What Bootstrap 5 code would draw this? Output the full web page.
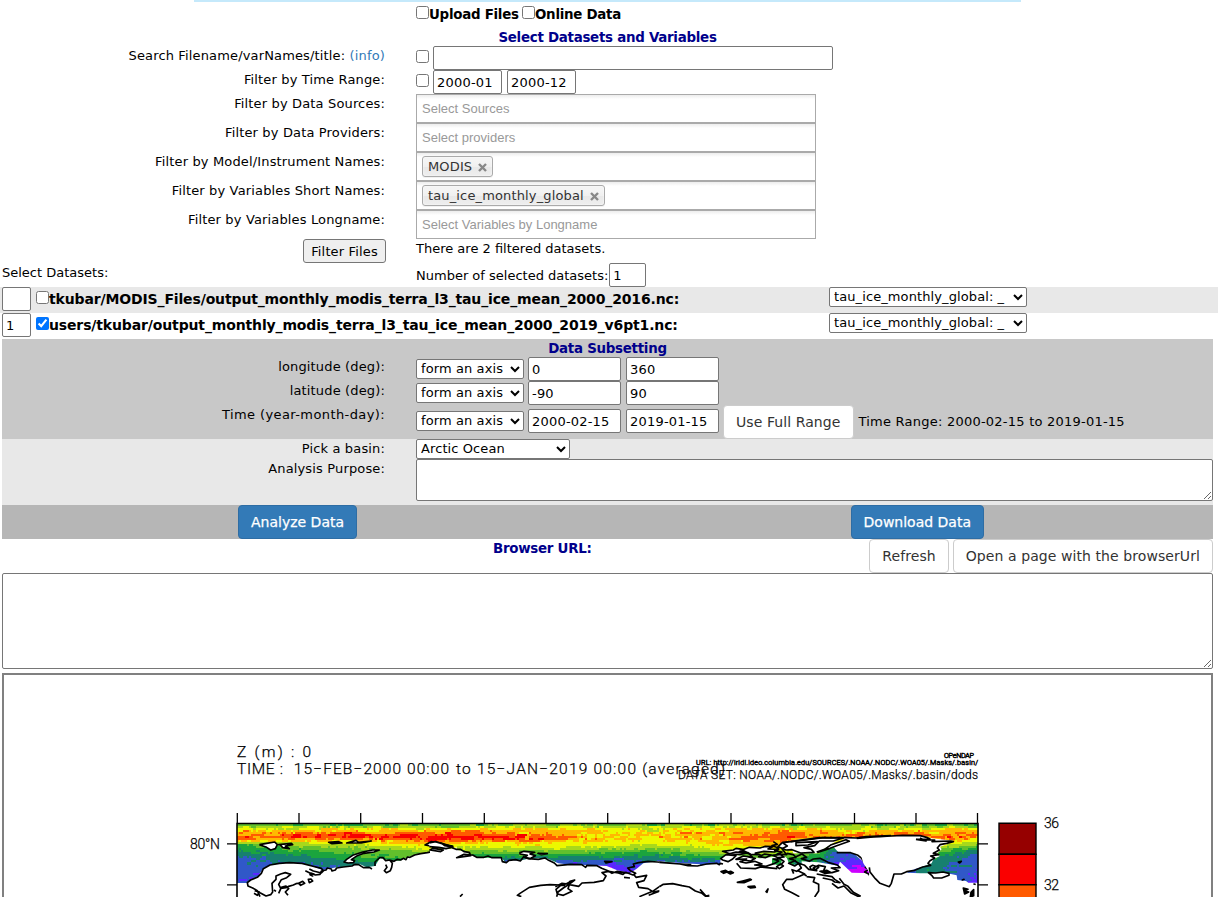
<!DOCTYPE html>
<html lang="en">
<head>
<meta charset="utf-8">
<meta name="viewport" content="width=device-width, initial-scale=1">
<title>Select Datasets and Variables</title>
<link rel="stylesheet" href="https://cdn.jsdelivr.net/npm/bootstrap@5.3.0/dist/css/bootstrap.min.css">
<style>
body{font-family:Verdana,"DejaVu Sans",sans-serif;font-size:13px;line-height:19px;color:#000;background:#fff;height:897px;overflow:hidden}
.topbar{height:2px;width:827px;margin-left:194px;background:#c5e9fb}
.page{width:1211px;margin-left:2px}
.lab{width:383px;margin-right:31px;text-align:right;flex:none;letter-spacing:.15px}
.lab a{color:#337ab7;text-decoration:none}
.head{color:#00008b;font-weight:700;font-size:13.4px;letter-spacing:-.27px;text-align:center}
.strong{font-weight:700;font-size:13.4px;letter-spacing:-.27px}
.h24{height:24px}.h29{height:29px}
input[type=checkbox]{width:13px;height:13px;margin:0;flex:none}
.fld{height:24px;border:1px solid #767676;border-radius:2px;padding:1px 3px;font-size:13px;line-height:20px;letter-spacing:.2px;background:#fff;color:#000;flex:none}
.sel{height:20px;border:1px solid #767676;border-radius:2px;padding:0 14px 0 4px;font-size:13px;line-height:18px;letter-spacing:.1px;color:#000;flex:none;appearance:none;
background:#fff url("data:image/svg+xml,%3Csvg xmlns='http://www.w3.org/2000/svg' width='10' height='7'%3E%3Cpath d='M1 1l4 4 4-4' fill='none' stroke='%23000' stroke-width='2'/%3E%3C/svg%3E") no-repeat right 3px center}
.chosen{width:400px;height:29px;border:1px solid #aaa;padding:0 5px;background:linear-gradient(#eee 1%,#fff 15%);flex:none}
.ph{color:#999;font-family:"Liberation Sans",Arial,sans-serif;font-size:13px}
.chip{height:21px;border:1px solid #aaa;border-radius:3px;background:linear-gradient(#f4f4f4 20%,#f0f0f0 50%,#e8e8e8 52%,#eee);color:#333;padding:0 5px;line-height:19px;letter-spacing:.14px;box-shadow:0 0 2px #fff inset,0 1px 0 rgba(0,0,0,.05)}
.chip svg{margin-left:6px;vertical-align:-1px}
.chip path{stroke:#888;stroke-width:2.4}
.filterbtn{height:24px;width:83px;border:1px solid #767676;border-radius:3px;background:#efefef;font-size:13px;padding:0;color:#000;letter-spacing:.15px}
.ds{height:26px;padding-left:2px}
.ds .nm{width:780px;line-height:25px;font-size:14px;letter-spacing:-.14px}
.bx{height:34px;font-size:14px;line-height:20px;padding:6px 12px;border-radius:4px;white-space:nowrap;flex:none;letter-spacing:.08px}
.bx-def{background:#fff;border-color:#ccc;color:#333}
.bx-pri{background:#337ab7;border-color:#2e6da4;color:#fff;letter-spacing:0;-webkit-text-stroke:.25px #fff}
.g1{background:#c8c8c8}.g2{background:#e8e8e8}.g3{background:#b6b6b6}
textarea{display:block;border:1px solid #767676;border-radius:2px;background:#fff}
.plot{border:2px solid #808080;border-bottom:0;height:224px;margin-top:4px;overflow:hidden}
.plot svg{display:block;font-family:"Roboto",sans-serif}
</style>
</head>
<body>
<div class="topbar"></div>
<div class="page">
  <div class="d-flex align-items-start" style="height:26px;padding:4px 0 0 414px">
    <input type="checkbox"><span class="strong" style="width:93px;line-height:17px">Upload Files</span>
    <input type="checkbox"><span class="strong" style="line-height:17px">Online Data</span>
  </div>
  <div class="head" style="height:18px;line-height:19px">Select Datasets and Variables</div>
  <div class="d-flex h24"><div class="lab">Search Filename/varNames/title: <a href="#">(info)</a></div>
    <input type="checkbox" class="mt-1"><input class="fld" style="width:400px;margin-left:4px"></div>
  <div class="d-flex h24"><div class="lab">Filter by Time Range:</div>
    <input type="checkbox" class="mt-1"><input class="fld" style="width:69px;margin-left:4px" value="2000-01"><input class="fld" style="width:69px;margin-left:5px" value="2000-12"></div>
  <div class="d-flex h29"><div class="lab">Filter by Data Sources:</div><div class="chosen d-flex align-items-center ph">Select Sources</div></div>
  <div class="d-flex h29"><div class="lab">Filter by Data Providers:</div><div class="chosen d-flex align-items-center ph">Select providers</div></div>
  <div class="d-flex h29"><div class="lab">Filter by Model/Instrument Names:</div><div class="chosen d-flex align-items-center"><span class="chip">MODIS<svg width="9" height="9"><path d="M1 1l7 7M8 1L1 8"/></svg></span></div></div>
  <div class="d-flex h29"><div class="lab">Filter by Variables Short Names:</div><div class="chosen d-flex align-items-center"><span class="chip">tau_ice_monthly_global<svg width="9" height="9"><path d="M1 1l7 7M8 1L1 8"/></svg></span></div></div>
  <div class="d-flex h29"><div class="lab">Filter by Variables Longname:</div><div class="chosen d-flex align-items-center ph">Select Variables by Longname</div></div>
  <div class="d-flex h24"><div class="lab" style="width:384px;margin-right:30px"><button class="filterbtn">Filter Files</button></div><div>There are 2 filtered datasets.</div></div>
  <div class="d-flex h24"><div style="width:414px">Select Datasets:</div><div class="d-flex align-items-center">Number of selected datasets:<input class="fld" style="width:37px;margin-left:1px" value="1"></div></div>
</div>
<div class="ds d-flex g2">
  <input class="fld" style="width:29px"><input type="checkbox" style="margin:4px 0 0 5px"><span class="strong nm">tkubar/MODIS_Files/output_monthly_modis_terra_l3_tau_ice_mean_2000_2016.nc:</span>
  <select class="sel" style="width:198px"><option>tau_ice_monthly_global: _</option></select>
</div>
<div class="ds d-flex">
  <input class="fld" style="width:29px" value="1"><input type="checkbox" checked style="margin:4px 0 0 5px"><span class="strong nm">users/tkubar/output_monthly_modis_terra_l3_tau_ice_mean_2000_2019_v6pt1.nc:</span>
  <select class="sel" style="width:198px"><option>tau_ice_monthly_global: _</option></select>
</div>
<div class="page">
  <div class="g1" style="height:100px">
    <div class="head" style="height:18px">Data Subsetting</div>
    <div class="d-flex h24"><div class="lab">longitude (deg):</div><select class="sel" style="width:108px;margin-top:2px"><option>form an axis</option></select><input class="fld" style="width:93px;margin-left:4px" value="0"><input class="fld" style="width:93px;margin-left:5px" value="360"></div>
    <div class="d-flex h24"><div class="lab">latitude (deg):</div><select class="sel" style="width:108px;margin-top:2px"><option>form an axis</option></select><input class="fld" style="width:93px;margin-left:4px" value="-90"><input class="fld" style="width:93px;margin-left:5px" value="90"></div>
    <div class="d-flex" style="height:34px"><div class="lab" style="letter-spacing:.4px">Time (year-month-day):</div><select class="sel" style="width:108px;margin-top:6px"><option>form an axis</option></select><input class="fld" style="width:93px;margin:4px 0 0 4px" value="2000-02-15"><input class="fld" style="width:93px;margin:4px 4px 0 5px" value="2019-01-15"><button class="btn bx bx-def">Use Full Range</button><span style="line-height:34px;margin-left:5px;letter-spacing:.23px">Time Range: 2000-02-15 to 2019-01-15</span></div>
  </div>
  <div class="g2" style="height:66px">
    <div class="d-flex" style="height:20px"><div class="lab">Pick a basin:</div><select class="sel" style="width:154px"><option>Arctic Ocean</option></select></div>
    <div class="d-flex"><div class="lab">Analysis Purpose:</div><textarea style="width:797px;height:42px"></textarea></div>
  </div>
  <div class="g3 d-flex" style="height:34px;padding-left:236px"><button class="btn bx bx-pri">Analyze Data</button><button class="btn bx bx-pri" style="margin-left:auto;margin-right:229px">Download Data</button></div>
  <div class="d-flex justify-content-end" style="height:34px"><div class="head me-auto" style="padding-left:491px">Browser URL:</div><button class="btn bx bx-def">Refresh</button><button class="btn bx bx-def ms-1">Open a page with the browserUrl</button></div>
  <textarea style="width:1211px;height:96px"></textarea>
  <div class="plot">
    <svg width="1207" height="222" viewBox="4 675 1207 222">
      <g id="field" shape-rendering="crispEdges"></g>
      <g stroke-linejoin="round" stroke="#000" stroke-width="5" fill="#fff">
        <g transform="translate(180 730) scale(.33333)">
          <path stroke="none" d="M171 459H203L212 450 232 442 250 415 270 405 325 397 365 400 395 408 428 420 440 418 470 412 500 410 540 403 560 412 585 408 600 384 632 392 660 392 685 380 715 372 760 365 790 362 830 352 850 520H171Z"/>
          <path d="M238 344l22-4 24-4 8 8-6 12-14 4-12-8-22-8M296 344l38-4 4 4-22 4 12 8-20-3-8-9zM446 337l28-2 12 4-30 2zM500 339l18-5 10-3 8 6 38-4-30 6zM598 360l-20 0-30 6-30 10-18 12-8 8 12 3 16-1 4-6-10-3 18-12 20-7 30-4zM735 345l18-10 30 4 24 8 8 5-28 0-24-2z"/>
          <path fill="none" d="M240 500l-8-18 -14-8-14-6-2-10 10-8 20-8 12-12 6-14 20-11 28-5 30-2 38 2 30 8 28 7 6 8-6 6-24-6-12-6M376 422l12 6 10 10-8-4 12-2-10-3 14 6 14-2 4-10 14-3 4-6 12 3 2 6 10-3 4-6 20-3 26-3 8-5 12 1 14 9 18-1 8 5M585 408l0-12 14-13 10 0 8 9 12-2 8 10-2 12-4 10-12 6-6-6 8-10-4-8M628 390l14 4 10-6 10 2 8-5 8 4 4-8 8 1 14-7 18-4 20-3 18-4 22 0 10-6 12-4M222 490l10 6 6-10-14-4M240 488l18 10 14-4 6-8-2-26 12-12 0-10 14-6 14-4 16 5-12 10-16 6-8 14 6 12 16-2 8-4 14-4 8-4 14-2M282 480l6 4M296 490l8-18 14-4 8 8-10 10 8 10M356 460l12-6 6 6-12 6zM385 448l8-1 5 6-10 5z"/>
        </g>
        <g transform="translate(430 730) scale(.33333)">
          <path stroke="none" d="M0 356 L75 358 105 365 122 374 150 383 215 383 225 397 245 390 270 392 300 385 350 385 385 400 425 405 470 405 530 408 560 420 600 430 620 416 640 400 680 393 740 398 810 403V520H0Z"/>
          <path d="M-2 339l18-4 20 6 8 6 24 4-20 5-22-4-28-2M0 360l32 5 8-5-32-5zM270 368l12-4 32 3-14 5 16 5-16 9-16-4 8-6-22-4zM324 370l28 1-18 3zM524 394l22 1-18 4z"/>
          <path fill="none" d="M42 344l26 4 0 6 10 4 14 0 10 7 16 2 4 10-42 6 22-10 26 2 12 7 22 0 12-4 12 5 28 0 3 12 12 3 8-7 20-2 14 4 10-13 14 6 30 2 20-4 8 5 20 10 8 8 40-4 34 1 12 8 4-6 30 1 14 8 26 10 24 4 14 4 8-6 22 8 8-5-16-8-8-8 20-4-3-8 16-4 28-4 28 2 60 6 42 2M600 430l-38-6-16 6-10-6-20 4 12 10-8 14-28 5-36 2-10 10-28-5-4 12 12 8-26 12-18-4-4-14 14-12 20-6 12-6M406 466l-46-2-28 2-34 6-28 18-8 6 12 4M380 500l4-14 16-12 16-10 18-14-14 4-8 8-16-2-20 10M582 442l18 2M610 432l8 10 32-6-8 16-22 6 6 14 28 4 16 10 22-4-36 14M90 500l8-8M628 500l40-16 20-14 10-8 16 6-18 12 16 2 12-18 20-4 44 2 30 12"/>
        </g>
        <g transform="translate(660 730) scale(.33333)">
          <path stroke="none" d="M-2 397L60 402 110 408 170 400 180 404 182 386 195 375 225 370 230 376 300 385 345 380 365 373 380 384 400 404 425 405 425 394 475 397 535 407 540 395 575 428 750 432V520H-2Z"/>
          <path stroke="none" d="M390 335L420 328 530 320 560 323 690 320V420L655 460 630 432 610 395 580 370 535 367 520 350 570 332 540 326 510 345 470 370 400 370Z"/>
          <path fill="#1ba43e" stroke="none" d="M336 385l30 4-4 18-26-6zM380 382l20 6 2 18-16-8z"/>
          <path d="M188 364l32-4 8-5 24 4-14 6 26 3-24 5-28-1zM246 360l22-8 32 2 16-5 22 1-14 7 32 1-12 8-32-2-26 5 14 5-28-1-12-6zM354 350l14-13 24-2 42-6 46-6 70 1-30 9-42 0-14 14-32 6 22 5 8 9-40 2-26-10-18 1-14-6z"/>
          <path d="M408 338l64-3-28 10-36 2zM470 366l24-8 20-14 44-15 10 5-40 14-18 7-38 12"/>
          <path fill="none" d="M-2 397l62 5 24 5 28 1 28-6 30-2 8 4 3-4 8 2M182 386l16-12 30 3-10 10-14 8-16-5zM200 374l28-8 38 4 12 12-28-4-22 10 32-1-20 8 18 4 26-5 22 8-22 3 34 4 24-8 14-8-16-6 20-1 12 8-10 11M246 390l26 3 14-8-24-5M296 380l18-8 20 3-18 8zM338 376l22-3 12 8-18 2zM230 400l12 14 44 2 16-5 50 5M350 410l12-8 8 6-12 8zM340 335l12 8-16 4 20 7-12 8 22 4-14 6 28 2-14-18 16-8-12-8 18-6M380 370l20 4 8 8-20 4 18 6-20 8 18 8 12-8-10-6M408 380l18-8 14 10-16 4 24 8 12-7 20-2 24 12 28 8 8 8-26 1 22 8-20 6-26-4 6-14-20-4-16 8 10 8-24-4-12-12-18-6 8 14-14 10-14-5 5 12M414 422l20 10-22 10-14 6-18 0-12 16 6 14 22 10 22 12M440 440l24 3-4 12 16 8 0 20-12 18M428 430l12 8M470 432l22 4 24 4 8 8 16 10-16-2-8-6-28-6M450 410l8-4 18 6-10 8-14-3zM480 424l20-3 14 7-20 2zM516 460l18 14 18-6 20 20 28 14"/>
          <path fill="none" d="M530 368l24 0 18 0 22 8 12 10 8 14 2-8-10-4 18 10-8 14 10 6-12 8 12 6 6 12 12 14 14 4 20 4 12-18M392 335l46-5 50-7 70 0 30 1 30-4 75-3"/>
          <path fill="#000" d="M183 425l14-4 6 4-12 5zM202 427l10-3 8 4-9 4zM232 457l16-4 22-6 4 2-22 9zM264 470l20-2 2 4-14 2zM318 485l6-8-3 10z"/>
          <path fill="none" d="M-2 470l12-7 28-2 28 6 22 4 18 12 20 7 12 10 10 2M120 478l18 20 10-2"/>
        </g>
        <g transform="translate(840 730) scale(.33333)">
          <path stroke="none" d="M50 330L120 321 190 317 240 317 275 325 340 332 322 342 300 350 305 358 288 373 300 378 280 388 275 400 245 411 225 417 200 428 160 432 150 460 148 466 120 455 90 430 70 400 62 372ZM200 428L240 430H322L350 436 352 450 378 453 385 458H412V520H60L90 425Z"/>
          <path fill="none" d="M50 325l50-4 20-1 32-2 36-2 52 1 20 5 10 5-40 1 54 2-8 5 56-2 8 2-20 5-20 4-8 10 6 6-18 10 16 4-24 4 12 6-14 8-6 8 8 6-24 5-24 10-24 4-16 7-22 0-8 28-6 10-28-10-14-14-16-20-2-14M228 328l30 5-18-9"/>
          <path d="M265 428l22 1 22-3 18 4 0 6-22 8-24 0-6-8z"/>
          <path fill="#000" d="M355 396l9-2-5 5zM367 450l5-2zM393 487l8-8 0 18-10 4zM370 474l14 4-12 4 14 4-12 6zM402 462l3 1z"/>
          <path fill="none" d="M-2 445l14 18 12 6 16 18 22 12"/>
        </g>
      </g>
      <g fill="none" stroke="#000" stroke-width="1.3">
        <path stroke-width="1.6" d="M237 897V823.5H978V897"/>
        <path d="M237.3 813v10M299 813v10M360.7 813v10M422.5 813v10M484.3 813v10M546 813v10M607.7 813v10M669.3 813v10M731 813v10M792.7 813v10M854.5 813v10M916 813v10M977.5 813v10M227 843.8h10M227 884.8h10M978 843.8h10M978 884.8h10"/>
      </g>
      <g stroke="#000" stroke-width="1.4"><path fill="#960000" d="M999 823.3h37v31h-37z"/><path fill="#fa0000" d="M999 854.3h37v30.5h-37z"/><path fill="#ff5a00" d="M999 884.8h37v30h-37z"/></g>
      <g font-weight="300" font-size="15.5" stroke="#000" stroke-width=".25">
        <text x="237" y="757" textLength="74">Z (m) : 0</text>
        <text y="774"><tspan x="237" textLength="46">TIME :</tspan><tspan x="289" textLength="160"> 15−FEB−2000 00:00</tspan><tspan x="456" textLength="269">to 15−JAN−2019 00:00 (averaged)</tspan></text>
        <text x="678" y="779" font-size="12" textLength="300">DATA SET: NOAA/.NODC/.WOA05/.Masks/.basin/dods</text>
        <g font-size="7.2" stroke-width=".55"><text x="696" y="765" textLength="282">URL: http://iridl.ldeo.columbia.edu/SOURCES/.NOAA/.NODC/.WOA05/.Masks/.basin/</text>
        <text x="944" y="758" textLength="30">OPeNDAP</text></g>
        <g font-size="14"><text x="190" y="848.5" textLength="30">80°N</text><text x="1044" y="828" textLength="15">36</text><text x="1044" y="890" textLength="15">32</text></g>
      </g>
    </svg>
  </div>
</div>
<script src="https://cdn.jsdelivr.net/npm/bootstrap@5.3.0/dist/js/bootstrap.bundle.min.js"></script>
<script>
// One-degree cells: each profile lists y, level pairs at a given x.
const colors=['#cc00ff','#5a28ff','#3058c8','#17806f','#1ba43e','#62c02c','#a8d81c','#ecf800','#ffb800','#ff5a00','#f80000'];
const prof=[
[237,824,4.5,827,6,831,8,834,8.3,838,9,841,7.5,844,4.5,850,3.3,858,2.4,883,1.8],
[300,824,4.5,828,7,833,8.5,836,9.6,840,8.2,843,6.5,849,4.8,856,3.7,863,2.4,872,1],
[360,824,4.5,829,7.3,834,9.3,837,9.7,840,7.8,846,6,852,5,859,4,866,2.9,871,2],
[430,824,4.5,829,7.5,834,9.4,837,10,840,9.4,845,7.5,851,6,856,5,862,4],
[480,824,5,828,7.3,834,9.3,837,10,840,8.8,845,7,850,5.5,856,4,861,3],
[550,824,5,829,7.5,834,8.3,838,9,842,7.5,848,6.6,853,5,857,3.5,862,2],
[600,824,5,830,7.5,840,7.7,846,6.6,851,5,856,3.5,862,2.2,866,1,868,0],
[650,824,5,830,7.3,838,7.6,843,6.8,849,5.5,854,4,859,3,864,1.8],
[730,824,5,829,8,838,8.2,845,7.5,850,6.5,856,5,861,3,865,1],
[790,824,4.8,830,8,836,9.4,840,8.7,845,8,851,6.3,857,5,862,3.5],
[815,824,4.8,830,8,836,9,841,8,846,6.5,851,5,856,4,864,3],
[840,824,4.5,830,7.5,836,8.8,841,7.5,846,3.8,851,2,856,1.6,865,1.6,870,.6],
[858,824,4.7,831,7.5,837,9.5,845,4,855,2,861,1.2,866,0],
[925,824,4.5,830,7.8,837,9,842,7.5,848,6,855,4.5,862,3.5,870,3],
[977,824,4.5,829,7.7,836,8.7,841,7,848,4.5,852,2.6,857,2,870,1.8,883,1]];
let seed=7;const rnd=()=>(seed=(seed*16807)%2147483647)/2147483647;
function at(p,y){for(let i=1;i<p.length-2;i+=2)if(y<p[i+2]){const t=Math.max(0,(y-p[i])/(p[i+2]-p[i]));return p[i+1]+t*(p[i+3]-p[i+1])}return p[p.length-1]}
const w=741/360,h=2.05,d=colors.map(()=>'');
for(let r=0;r<29;r++){let n=0;for(let c=0;c<360;c++){
  const x=237+c*w,y=823.5+r*h;let k=0;while(k<prof.length-2&&x>prof[k+1][0])k++;
  const t=(x-prof[k][0])/(prof[k+1][0]-prof[k][0]);
  if(rnd()<.5)n=(rnd()+rnd()-1)*(r<9?1.1:.55);
  const v=at(prof[k],y+1)*(1-t)+at(prof[k+1],y+1)*t+n;
  d[Math.max(0,Math.min(10,Math.round(v)))]+=`M${x.toFixed(2)} ${y.toFixed(2)}h${w.toFixed(2)}v${h}h-${w.toFixed(2)}z`;
}}
document.getElementById('field').innerHTML=d.map((s,i)=>`<path fill="${colors[i]}" d="${s}"/>`).join('');
</script>
</body>
</html>
